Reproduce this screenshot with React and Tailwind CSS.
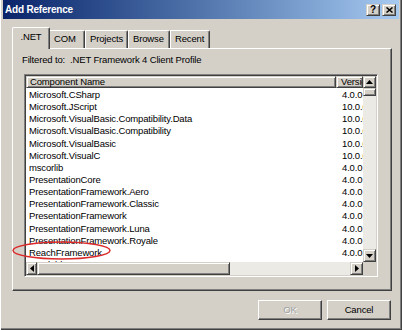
import React from "react";

const rows = [
  ["Microsoft.CSharp", "4.0.0.0"],
  ["Microsoft.JScript", "10.0.0.0"],
  ["Microsoft.VisualBasic.Compatibility.Data", "10.0.0.0"],
  ["Microsoft.VisualBasic.Compatibility", "10.0.0.0"],
  ["Microsoft.VisualBasic", "10.0.0.0"],
  ["Microsoft.VisualC", "10.0.0.0"],
  ["mscorlib", "4.0.0.0"],
  ["PresentationCore", "4.0.0.0"],
  ["PresentationFramework.Aero", "4.0.0.0"],
  ["PresentationFramework.Classic", "4.0.0.0"],
  ["PresentationFramework", "4.0.0.0"],
  ["PresentationFramework.Luna", "4.0.0.0"],
  ["PresentationFramework.Royale", "4.0.0.0"],
  ["ReachFramework", "4.0.0.0"],
  ["sysglobl", "4.0.0.0"],
];

// classic 3d raised look
const raised =
  "border border-t-[#d4d0c8] border-l-[#d4d0c8] border-r-[#404040] border-b-[#404040] bg-[#d4d0c8] shadow-[inset_1px_1px_0_#fff,inset_-1px_-1px_0_#808080]";

const Arrow = ({ dir }) => {
  const pts = {
    up: "0,4 7,4 3.5,0",
    down: "0,0 7,0 3.5,4",
    left: "4,0 4,7 0,3.5",
    right: "0,0 0,7 4,3.5",
  }[dir];
  const vertical = dir === "up" || dir === "down";
  return (
    <svg
      width={vertical ? 7 : 4}
      height={vertical ? 4 : 7}
      viewBox={vertical ? "0 0 7 4" : "0 0 4 7"}
    >
      <polygon points={pts} fill="#000" />
    </svg>
  );
};

const Tab = ({ label, className }) => (
  <div
    className={
      "h-[18px] flex items-center pl-[4px] border-t border-t-white border-r border-r-[#404040] shadow-[inset_-1px_0_0_#808080] rounded-tr-[2px] " +
      className
    }
  >
    {label}
  </div>
);

export default function App() {
  return (
    <div className="relative w-[402px] h-[330px] bg-[#d4d0c8] overflow-hidden font-['Liberation_Sans',Arial,sans-serif] text-[9.5px] tracking-[-0.15px] text-black shadow-[inset_1px_0_0_#fff,inset_-1px_-1px_0_#404040,inset_-2px_-2px_0_#808080]">
      {/* title bar */}
      <div className="mx-[3px] h-[19px] flex items-center justify-between pl-[2px] pr-[3px] bg-linear-to-r from-[#0a246a] to-[#a6caf0]">
        <span className="text-white font-bold text-[10px] tracking-[-0.2px]">Add Reference</span>
        <div className="flex gap-[2px]">
          <div className={"w-[14px] h-[12px] flex items-center justify-center text-[10px] font-bold leading-none " + raised}>
            ?
          </div>
          <div className={"w-[14px] h-[12px] flex items-center justify-center " + raised}>
            <svg width="7" height="6" viewBox="0 0 7 6">
              <path d="M0.5 0.5 L6.5 5.5 M6.5 0.5 L0.5 5.5" stroke="#000" strokeWidth="1.5" />
            </svg>
          </div>
        </div>
      </div>

      {/* tabs */}
      <div className="relative z-10 mt-[8px] ml-[12px] h-[21px] flex items-end">
        <div className="w-[38px] h-[22px] -mb-[1px] flex items-center justify-center pb-[3px] bg-[#d4d0c8] border-t border-l border-white border-r border-r-[#404040] shadow-[inset_-1px_0_0_#808080] rounded-t-[2px]">
          .NET
        </div>
        <Tab label="COM" className="w-[35px]" />
        <Tab label="Projects" className="w-[43px] border-l border-l-white" />
        <Tab label="Browse" className="w-[42px] border-l border-l-white" />
        <Tab label="Recent" className="w-[40px] border-l border-l-white" />
      </div>

      {/* tab panel */}
      <div className="ml-[12px] w-[380px] h-[243px] flex flex-col border-t border-l border-white border-r border-b border-r-[#404040] border-b-[#404040] shadow-[inset_-1px_-1px_0_#808080]">
        <div className="mt-[4px] ml-[9px] h-[13px] leading-[13px]">
          Filtered to:&nbsp; .NET Framework 4 Client Profile
        </div>

        {/* list view */}
        <div className="mt-[8px] ml-[11px] w-[354px] h-[203px] p-[1px] border border-t-[#808080] border-l-[#808080] border-r-white border-b-white shadow-[inset_1px_1px_0_#404040,inset_-1px_-1px_0_#d4d0c8]">
          <div className="w-[350px] h-[199px] flex flex-col bg-white">
            <div className="h-[186px] flex">
              <div className="w-[337px] overflow-hidden">
                <div className="flex h-[12px]">
                  <div className={"w-[310px] pl-[3px] leading-[10px] " + raised}>Component Name</div>
                  <div className={"w-[27px] pl-[4px] leading-[10px] overflow-hidden whitespace-nowrap " + raised}>Version</div>
                </div>
                {rows.map(([name, ver]) => (
                  <div key={name} className="flex h-[12.15px] leading-[13px] whitespace-nowrap">
                    <div className="w-[310px] pl-[3px]">{name}</div>
                    <div className="w-[27px] pl-[6px] overflow-hidden">{ver}</div>
                  </div>
                ))}
              </div>
              {/* vertical scrollbar */}
              <div className="w-[13px] flex flex-col">
                <div className={"h-[12px] flex items-center justify-center " + raised}>
                  <Arrow dir="up" />
                </div>
                <div className={"h-[8px] " + raised} />
                <div className="flex-1 bg-[#eceae4]" />
                <div className={"h-[13px] flex items-center justify-center " + raised}>
                  <Arrow dir="down" />
                </div>
              </div>
            </div>
            {/* horizontal scrollbar */}
            <div className="h-[13px] flex">
              <div className={"w-[11px] flex items-center justify-center " + raised}>
                <Arrow dir="left" />
              </div>
              <div className={"w-[193px] " + raised} />
              <div className="w-[120px] bg-[#eceae4]" />
              <div className={"w-[13px] flex items-center justify-center " + raised}>
                <Arrow dir="right" />
              </div>
              <div className="w-[13px] bg-[#d4d0c8]" />
            </div>
          </div>
        </div>
      </div>

      {/* buttons */}
      <div className="mt-[9px] pr-[11px] flex justify-end gap-[5px]">
        <div className="w-[64px] h-[20px] flex items-center justify-center text-[#a0a0a0] [text-shadow:1px_1px_0_#fff] border border-t-white border-l-white border-r-[#404040] border-b-[#404040] shadow-[inset_-1px_-1px_0_#808080]">
          OK
        </div>
        <div className="w-[64px] h-[20px] flex items-center justify-center border border-t-white border-l-white border-r-[#404040] border-b-[#404040] shadow-[inset_-1px_-1px_0_#808080]">
          Cancel
        </div>
      </div>

      {/* red annotation ellipse */}
      <svg className="absolute left-[11px] top-[240px]" width="102" height="22" viewBox="0 0 102 22">
        <ellipse cx="50.5" cy="10.5" rx="48.5" ry="8.5" fill="none" stroke="#dc2a2a" strokeWidth="1.5" />
      </svg>
    </div>
  );
}
